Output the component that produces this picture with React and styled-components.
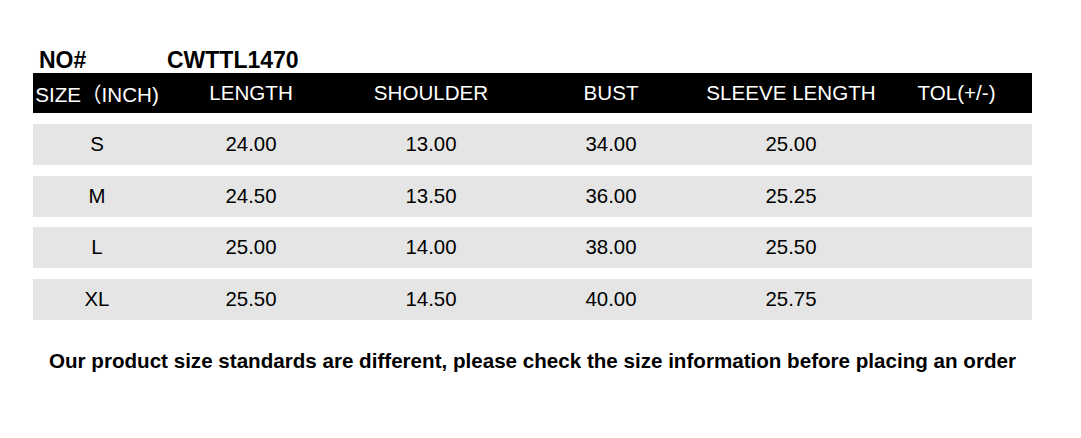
import React from 'react';
import styled, { createGlobalStyle } from 'styled-components';

const GlobalStyle = createGlobalStyle`
  body {
    margin: 0;
    background: #fff;
    font-family: "Liberation Sans", Arial, "Noto Sans CJK SC", sans-serif;
    color: #000;
  }
`;

const Page = styled.div`
  width: 1081px;
  height: 438px;
  padding: 47px 0 0 33px;
  box-sizing: border-box;
`;

const Sheet = styled.div`
  width: 999px;
`;

const TitleRow = styled.div`
  display: flex;
  padding-left: 6px;
  font-size: 23px;
  font-weight: 700;
  line-height: 26px;
  height: 26px;

  .label {
    width: 128px;
  }
`;

const HeaderBar = styled.div`
  display: grid;
  grid-template-columns: 128px 180px 180px 180px 180px 1fr;
  align-items: center;
  height: 40px;
  background: #000;
  color: #fff;
  font-size: 20.6px;
  text-align: center;
`;

const Rows = styled.div`
  display: flex;
  flex-direction: column;
  gap: 10.5px;
  margin-top: 11px;
`;

const Row = styled.div`
  display: grid;
  grid-template-columns: 128px 180px 180px 180px 180px 1fr;
  align-items: center;
  height: 41px;
  background: #e5e5e5;
  font-size: 20.4px;
  text-align: center;
`;

const Note = styled.p`
  margin: 29px 0 0;
  font-size: 20.6px;
  font-weight: 700;
  text-align: center;
  line-height: 24px;
`;

const headers = ['SIZE（INCH)', 'LENGTH', 'SHOULDER', 'BUST', 'SLEEVE LENGTH', 'TOL(+/-)'];

const sizes = [
  ['S', '24.00', '13.00', '34.00', '25.00', ''],
  ['M', '24.50', '13.50', '36.00', '25.25', ''],
  ['L', '25.00', '14.00', '38.00', '25.50', ''],
  ['XL', '25.50', '14.50', '40.00', '25.75', ''],
];

const App = () => (
  <Page>
    <GlobalStyle />
    <Sheet>
      <TitleRow>
        <span className="label">NO#</span>
        <span>CWTTL1470</span>
      </TitleRow>
      <HeaderBar>
        {headers.map((h) => (
          <span key={h}>{h}</span>
        ))}
      </HeaderBar>
      <Rows>
        {sizes.map((r) => (
          <Row key={r[0]}>
            {r.map((c, i) => (
              <span key={i}>{c}</span>
            ))}
          </Row>
        ))}
      </Rows>
      <Note>
        Our product size standards are different, please check the size information before placing an order
      </Note>
    </Sheet>
  </Page>
);

export default App;
